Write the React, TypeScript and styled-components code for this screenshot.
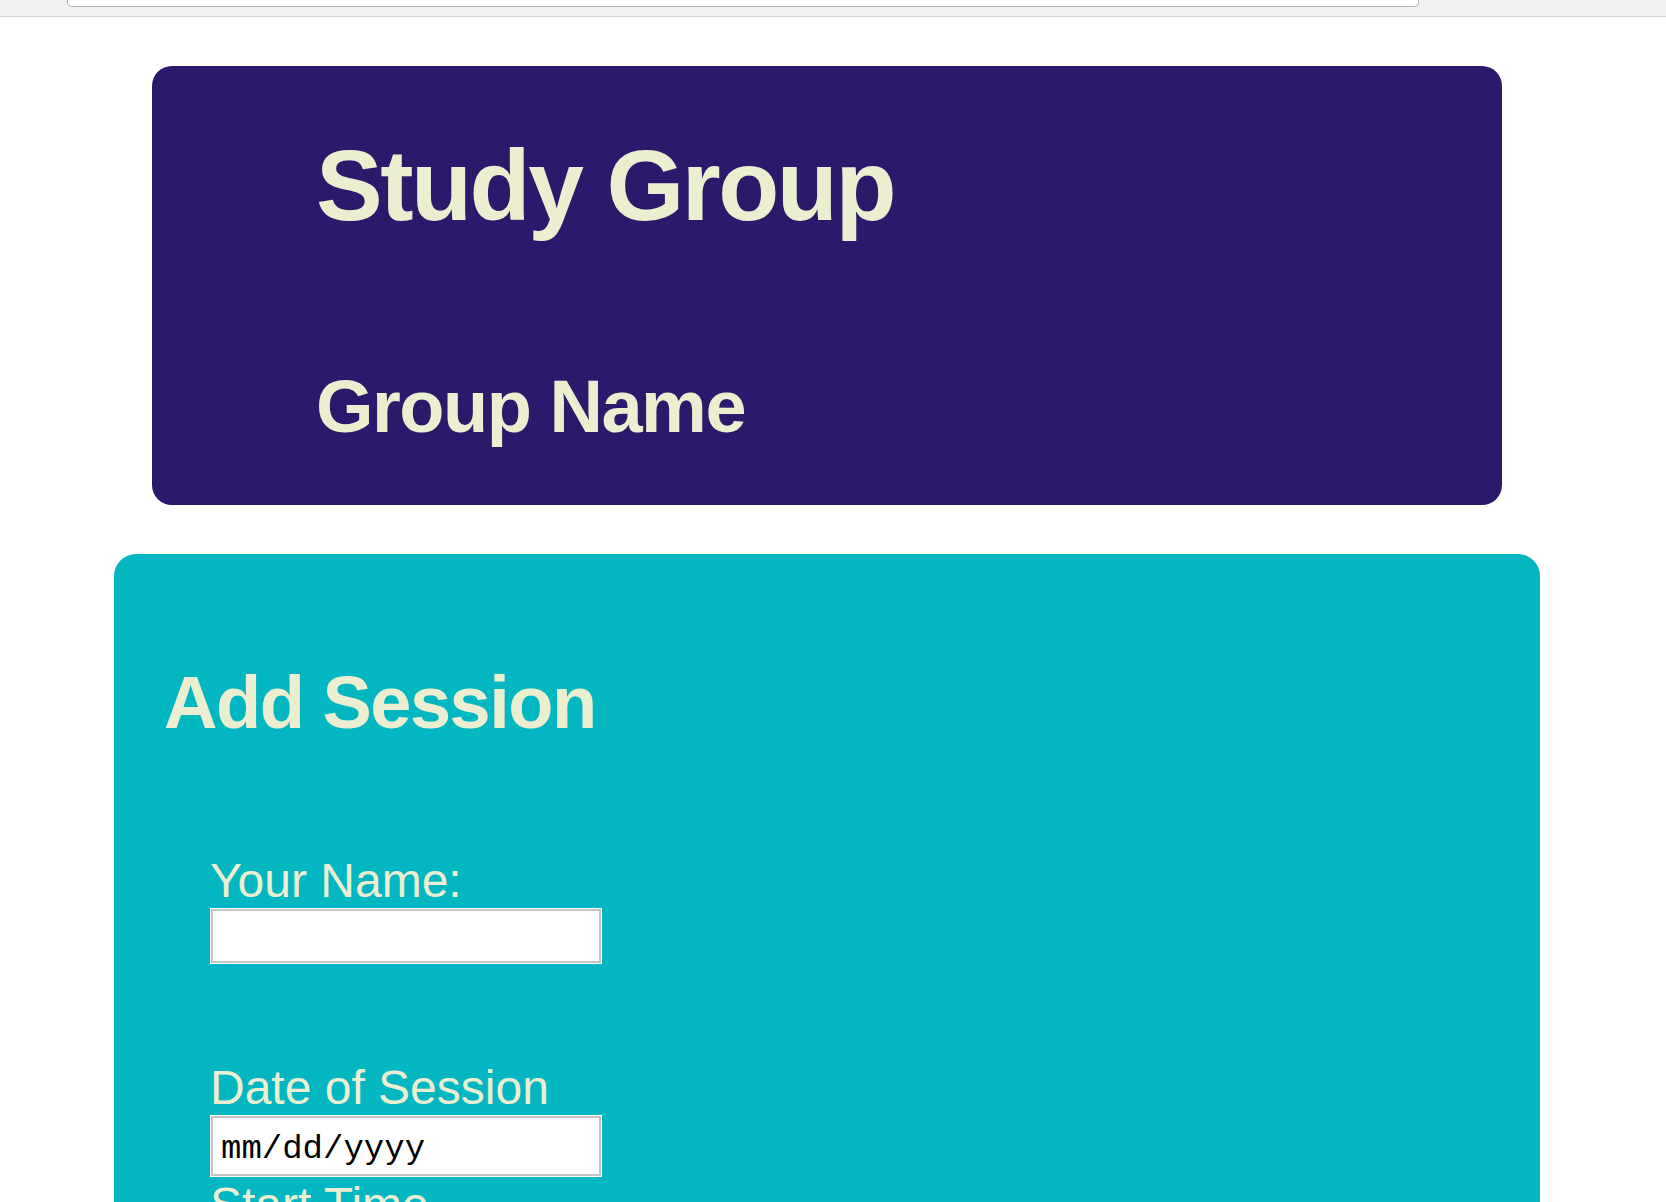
import React from "react";
import styled, { createGlobalStyle } from "styled-components";

const GlobalStyle = createGlobalStyle`
  html, body {
    margin: 0;
    padding: 0;
    background: #ffffff;
    font-family: "Liberation Sans", Arial, Helvetica, sans-serif;
  }
  * { box-sizing: border-box; }
`;

const TopBar = styled.div`
  height: 17px;
  background: #f1f1f1;
  border-bottom: 1px solid #d2d2d2;
`;

const AddressBox = styled.div`
  margin-left: 67px;
  width: 1352px;
  height: 7px;
  background: #ffffff;
  border: 1px solid #b4b4b4;
  border-top: none;
  border-radius: 0 0 5px 5px;
`;

const Page = styled.div`
  width: 1654px;
  padding-bottom: 80px;
`;

const HeaderCard = styled.header`
  display: flow-root;
  width: 1350px;
  height: 439px;
  margin: 49px auto 0;
  padding: 62px 0 0 164px;
  background: #2b196b;
  border-radius: 20px;
  color: #ecefcf;
`;

const Title = styled.h1`
  margin: 0;
  font-size: 100px;
  line-height: 115px;
  font-weight: 700;
  letter-spacing: -2.5px;
`;

const Heading = styled.h2<{ $top: number }>`
  margin: ${(p) => p.$top}px 0 0;
  font-size: 74px;
  line-height: 85px;
  font-weight: 700;
  letter-spacing: -1.5px;
  color: #ecefcf;
`;

const SessionCard = styled.section`
  display: flow-root;
  width: 1426px;
  margin: 49px auto 0;
  padding: 0 0 120px 50px;
  background: #02b7c2;
  border-radius: 22px;
`;

const Form = styled.form`
  margin-left: 46px;
  padding-top: 108px;
`;

const Field = styled.div<{ $top: number }>`
  margin-top: ${(p) => p.$top}px;
`;

const Label = styled.label`
  display: block;
  font-size: 48px;
  line-height: 55px;
  color: #ecefcf;
`;

const TextInput = styled.input<{ $h: number }>`
  display: block;
  width: 392px;
  height: ${(p) => p.$h}px;
  margin: 0;
  padding: 6px 8px 0 10px;
  background: #ffffff;
  border: 1px solid #ffffff;
  box-shadow: inset 0 0 0 2px #c4c4c4;
  border-radius: 0;
  outline: none;
  font-family: "Liberation Mono", "Courier New", monospace;
  font-size: 34px;
  color: #000000;
  &::placeholder {
    color: #000000;
    opacity: 1;
  }
`;

export default function App() {
  return (
    <>
      <GlobalStyle />
      <TopBar>
        <AddressBox />
      </TopBar>
      <Page>
        <HeaderCard>
          <Title>Study Group</Title>
          <Heading $top={121}>Group Name</Heading>
        </HeaderCard>
        <SessionCard>
          <Heading $top={106}>Add Session</Heading>
          <Form onSubmit={(e) => e.preventDefault()}>
            <Field $top={0}>
              <Label htmlFor="name">Your Name:</Label>
              <TextInput id="name" type="text" $h={56} />
            </Field>
            <Field $top={96}>
              <Label htmlFor="date">Date of Session</Label>
              <TextInput id="date" type="text" placeholder="mm/dd/yyyy" $h={62} />
              <Label htmlFor="start">Start Time</Label>
              <TextInput id="start" type="text" placeholder="--:-- --" $h={62} />
            </Field>
          </Form>
        </SessionCard>
      </Page>
    </>
  );
}
